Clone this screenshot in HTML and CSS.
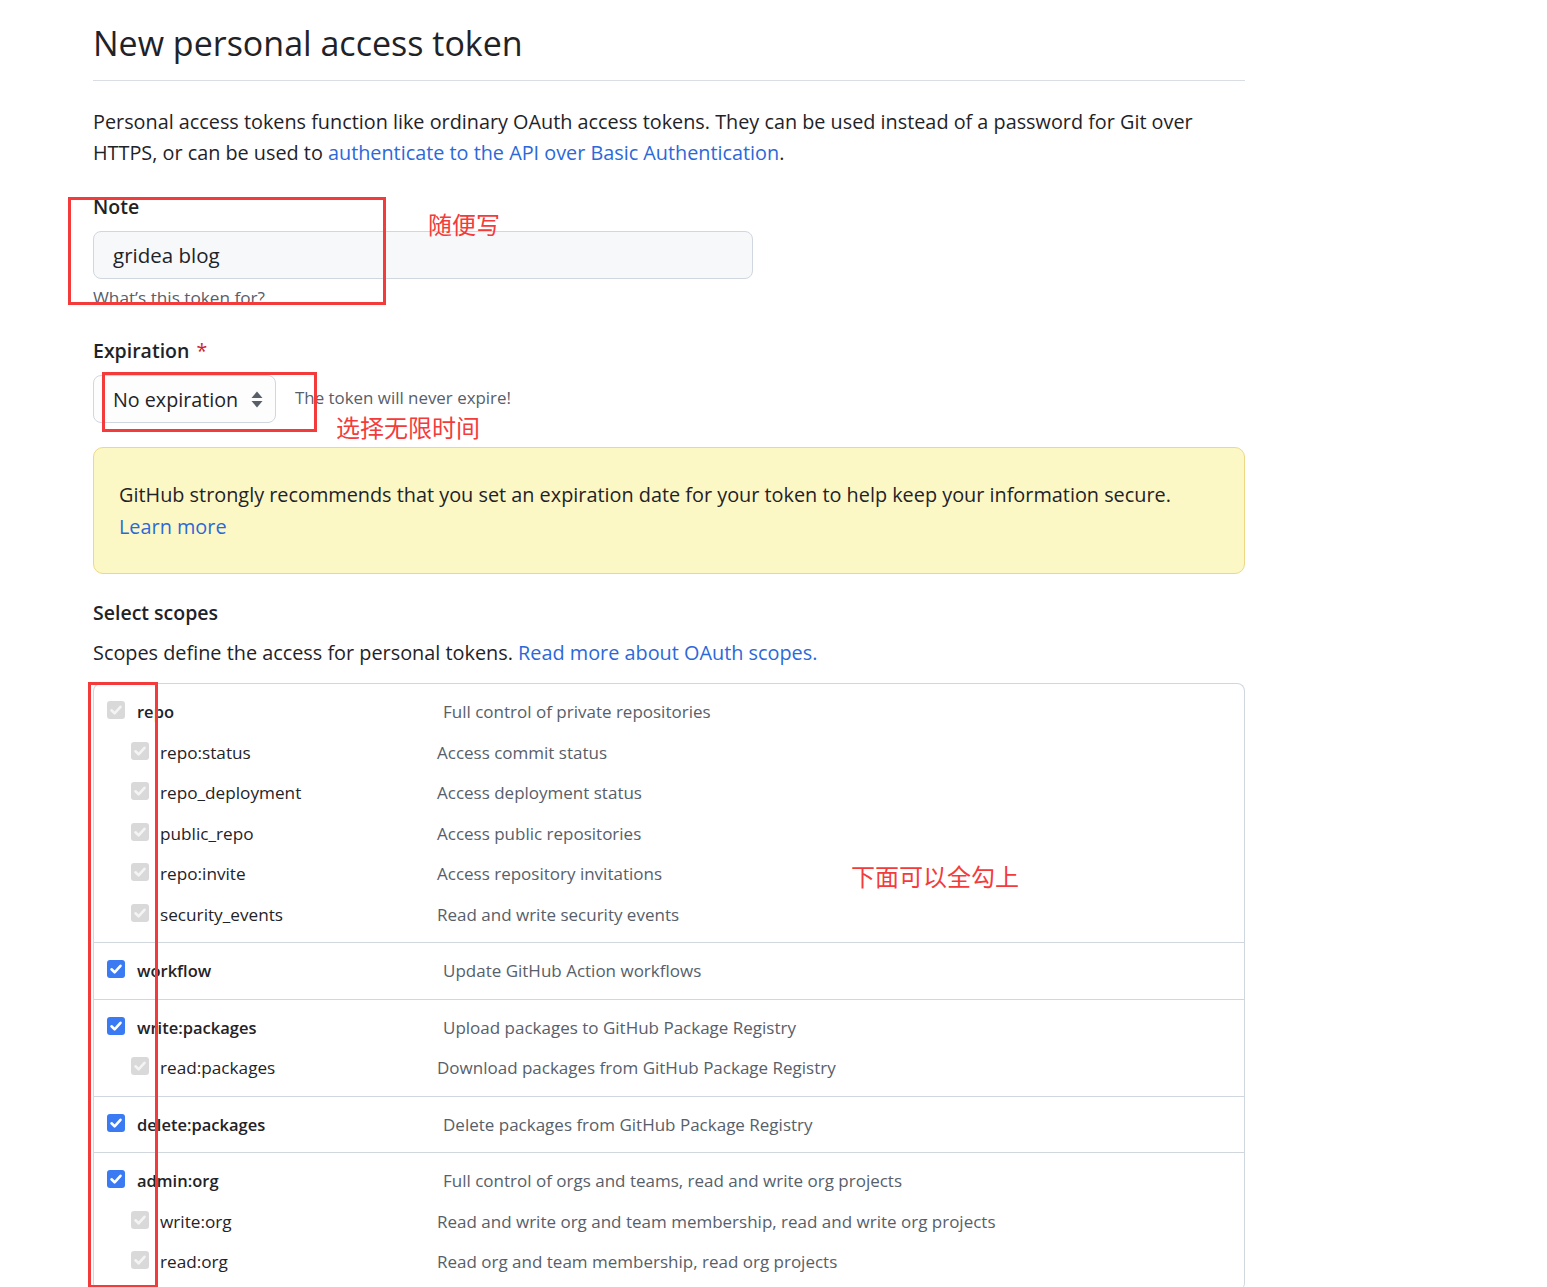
FILE: index.html
```html
<!DOCTYPE html>
<html lang="en">
<head>
<meta charset="utf-8">
<title>New personal access token</title>
<link rel="stylesheet" href="styles.css">
</head>
<body>
<div class="page">
  <div class="subhead">
    <h1 class="subhead-title">New personal access token</h1>
  </div>

  <p class="intro">Personal access tokens function like ordinary OAuth access tokens. They can be used instead of a password for Git over HTTPS, or can be used to <a href="#">authenticate to the API over Basic Authentication</a>.</p>

  <div class="field">
    <label class="field-label">Note</label>
    <div class="input">gridea blog</div>
    <p class="hint">What’s this token for?</p>
  </div>

  <div class="field field-exp">
    <label class="field-label">Expiration <span class="req">*</span></label>
    <div class="exp-row">
      <div class="select">
        <span>No expiration</span>
        <svg class="select-arrows" width="12" height="17" viewBox="0 0 12 17"><path d="M6 0.5 L11.5 7 H0.5 Z" fill="#57606a"/><path d="M6 16.5 L11.5 10 H0.5 Z" fill="#57606a"/></svg>
      </div>
      <span class="exp-note">The token will never expire!</span>
    </div>
  </div>

  <div class="flash">
    GitHub strongly recommends that you set an expiration date for your token to help keep your information secure.<br>
    <a href="#">Learn more</a>
  </div>

  <h3 class="scopes-title">Select scopes</h3>
  <p class="scopes-desc">Scopes define the access for personal tokens. <a href="#">Read more about OAuth scopes.</a></p>

  <div class="scopes">
    <div class="group">
      <div class="row top"><span class="cb dis"><svg viewBox="0 0 18 18"><path d="M4.5 9.3 L7.6 12.3 L13.5 5.8" /></svg></span><span class="name">repo</span><span class="desc">Full control of private repositories</span></div>
      <div class="row sub"><span class="cb dis"><svg viewBox="0 0 18 18"><path d="M4.5 9.3 L7.6 12.3 L13.5 5.8" /></svg></span><span class="name">repo:status</span><span class="desc">Access commit status</span></div>
      <div class="row sub"><span class="cb dis"><svg viewBox="0 0 18 18"><path d="M4.5 9.3 L7.6 12.3 L13.5 5.8" /></svg></span><span class="name">repo_deployment</span><span class="desc">Access deployment status</span></div>
      <div class="row sub"><span class="cb dis"><svg viewBox="0 0 18 18"><path d="M4.5 9.3 L7.6 12.3 L13.5 5.8" /></svg></span><span class="name">public_repo</span><span class="desc">Access public repositories</span></div>
      <div class="row sub"><span class="cb dis"><svg viewBox="0 0 18 18"><path d="M4.5 9.3 L7.6 12.3 L13.5 5.8" /></svg></span><span class="name">repo:invite</span><span class="desc">Access repository invitations</span></div>
      <div class="row sub"><span class="cb dis"><svg viewBox="0 0 18 18"><path d="M4.5 9.3 L7.6 12.3 L13.5 5.8" /></svg></span><span class="name">security_events</span><span class="desc">Read and write security events</span></div>
    </div>
    <div class="group">
      <div class="row top"><span class="cb on"><svg viewBox="0 0 18 18"><path d="M4.5 9.3 L7.6 12.3 L13.5 5.8" /></svg></span><span class="name">workflow</span><span class="desc">Update GitHub Action workflows</span></div>
    </div>
    <div class="group">
      <div class="row top"><span class="cb on"><svg viewBox="0 0 18 18"><path d="M4.5 9.3 L7.6 12.3 L13.5 5.8" /></svg></span><span class="name">write:packages</span><span class="desc">Upload packages to GitHub Package Registry</span></div>
      <div class="row sub"><span class="cb dis"><svg viewBox="0 0 18 18"><path d="M4.5 9.3 L7.6 12.3 L13.5 5.8" /></svg></span><span class="name">read:packages</span><span class="desc">Download packages from GitHub Package Registry</span></div>
    </div>
    <div class="group">
      <div class="row top"><span class="cb on"><svg viewBox="0 0 18 18"><path d="M4.5 9.3 L7.6 12.3 L13.5 5.8" /></svg></span><span class="name">delete:packages</span><span class="desc">Delete packages from GitHub Package Registry</span></div>
    </div>
    <div class="group">
      <div class="row top"><span class="cb on"><svg viewBox="0 0 18 18"><path d="M4.5 9.3 L7.6 12.3 L13.5 5.8" /></svg></span><span class="name">admin:org</span><span class="desc">Full control of orgs and teams, read and write org projects</span></div>
      <div class="row sub"><span class="cb dis"><svg viewBox="0 0 18 18"><path d="M4.5 9.3 L7.6 12.3 L13.5 5.8" /></svg></span><span class="name">write:org</span><span class="desc">Read and write org and team membership, read and write org projects</span></div>
      <div class="row sub"><span class="cb dis"><svg viewBox="0 0 18 18"><path d="M4.5 9.3 L7.6 12.3 L13.5 5.8" /></svg></span><span class="name">read:org</span><span class="desc">Read org and team membership, read org projects</span></div>
    </div>
  </div>
</div>

<div class="mark mark-note"></div>
<div class="mark mark-exp"></div>
<div class="mark mark-scopes"></div>
<div class="anno anno-note">随便写</div>
<div class="anno anno-exp">选择无限时间</div>
<div class="anno anno-scopes">下面可以全勾上</div>
</body>
</html>
```

FILE: styles.css
```css
html, body {
  margin: 0;
  padding: 0;
  background: #ffffff;
}
body {
  font-family: "Open Sans", "Noto Sans", "Liberation Sans", sans-serif;
  color: #1f2328;
  height: 1287px;
  overflow: hidden;
  position: relative;
}
a {
  color: #2c68d8;
  text-decoration: none;
}
.page {
  margin-left: 93px;
  width: 1152px;
}
.subhead {
  padding-top: 19px;
  border-bottom: 1px solid #d8dee4;
  padding-bottom: 13px;
}
.subhead-title {
  margin: 0;
  font-size: 34px;
  font-weight: 400;
  line-height: 48px;
  color: #1f2328;
}
.intro {
  margin: 25px 0 0;
  font-size: 19.82px;
  line-height: 31px;
  color: #1f2328;
}
.field {
  margin-top: 25px;
}
.field-label {
  display: block;
  font-size: 19.5px;
  font-weight: 600;
  line-height: 28px;
}
.input {
  margin-top: 10px;
  width: 620px;
  height: 46px;
  border: 1px solid #d0d7de;
  border-radius: 8px;
  background: #f6f8fa;
  padding: 0 19px;
  font-size: 20.5px;
  line-height: 46px;
  color: #1f2328;
}
.hint {
  margin: 7px 0 0;
  font-size: 17.2px;
  line-height: 24px;
  color: #57606a;
}
.field-exp {
  margin-top: 27px;
}
.req {
  color: #cf222e;
  font-weight: 400;
  margin-left: 2px;
}
.exp-row {
  margin-top: 10px;
  display: flex;
  align-items: center;
  gap: 19px;
}
.select {
  width: 183px;
  height: 48px;
  box-sizing: border-box;
  border: 1px solid #d0d7de;
  border-radius: 8px;
  background: #fdfdfd;
  display: flex;
  align-items: center;
  padding: 0 12px 0 19px;
  justify-content: space-between;
  font-size: 19.7px;
  color: #1f2328;
}
.select-arrows {
  display: block;
}
.exp-note {
  font-size: 16.9px;
  color: #57606a;
  margin-top: -4px;
}
.flash {
  margin-top: 24px;
  background: #fcf8c5;
  border: 1px solid #eed888;
  border-radius: 10px;
  padding: 31px 25px 30px;
  font-size: 19.85px;
  line-height: 32px;
  color: #1f2328;
}
.scopes-title {
  margin: 25px 0 0;
  font-size: 19.5px;
  font-weight: 600;
  line-height: 28px;
}
.scopes-desc {
  margin: 10px 0 0;
  font-size: 19.85px;
  line-height: 31px;
}
.scopes {
  margin-top: 15px;
  border: 1px solid #d0d7de;
  border-radius: 8px;
  border-bottom: none;
}
.group {
  padding: 7.5px 0;
  border-bottom: 1px solid #d0d7de;
}
.row {
  height: 40.5px;
  display: flex;
  align-items: center;
  font-size: 17.2px;
}
.row.top {
  padding-left: 13px;
}
.row.sub {
  padding-left: 37px;
}
.cb {
  width: 18px;
  height: 18px;
  border-radius: 3px;
  flex: none;
  margin-top: -3px;
}
.cb svg {
  display: block;
  width: 18px;
  height: 18px;
}
.cb path {
  fill: none;
  stroke: #ffffff;
  stroke-width: 2.6;
  stroke-linecap: round;
  stroke-linejoin: round;
}
.cb.on {
  background: #3a7af3;
}
.cb.dis {
  background: #d9d9d9;
}
.cb.dis path {
  stroke: #f4f4f4;
}
.row.top .name {
  margin-left: 12px;
  width: 306px;
  font-weight: 600;
  font-size: 16.5px;
  color: #1f2328;
}
.row.sub .name {
  margin-left: 11px;
  width: 277px;
  color: #1f2328;
}
.desc {
  font-size: 17px;
  color: #57606a;
}

.mark {
  position: absolute;
  border: 3px solid #f43b3b;
  box-sizing: border-box;
}
.mark-note {
  left: 68px;
  top: 197px;
  width: 318px;
  height: 108px;
}
.mark-exp {
  left: 102px;
  top: 372px;
  width: 215px;
  height: 60px;
}
.mark-scopes {
  left: 88px;
  top: 682px;
  width: 70px;
  height: 606px;
}
.anno {
  position: absolute;
  color: #f43b3b;
  font-family: "Noto Sans CJK SC", "Noto Sans", sans-serif;
  font-size: 24px;
  line-height: 28px;
  white-space: nowrap;
}
.anno-note {
  left: 428px;
  top: 210px;
}
.anno-exp {
  left: 336px;
  top: 413px;
}
.anno-scopes {
  left: 851px;
  top: 862px;
}
```
